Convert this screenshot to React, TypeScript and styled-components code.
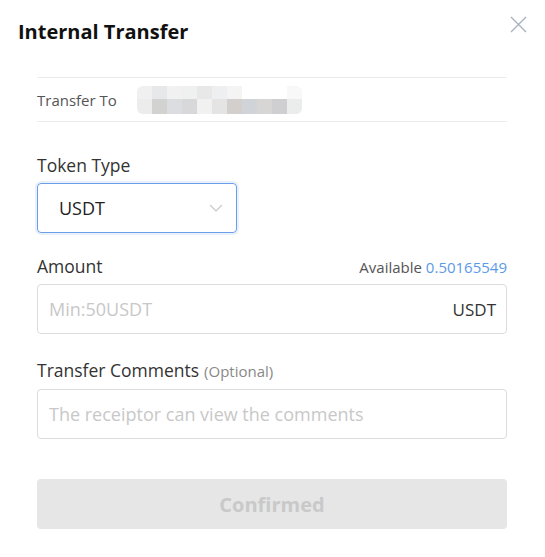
import React from "react";
import styled, { createGlobalStyle } from "styled-components";

const GlobalStyle = createGlobalStyle`
  body {
    margin: 0;
    background: #fff;
    font-family: "Open Sans", "Liberation Sans", sans-serif;
  }
`;

const Modal = styled.div`
  width: 545px;
  height: 557px;
  position: relative;
  background: #fff;
`;

const Header = styled.div`
  padding: 18px 18px 0;
  height: 77px;
  box-sizing: border-box;
`;

const Title = styled.h1`
  margin: 0;
  font-size: 20px;
  line-height: 28px;
  font-weight: 700;
  color: #111;
`;

const Close = styled.button`
  position: absolute;
  top: 15px;
  right: 17px;
  width: 19px;
  height: 19px;
  padding: 0;
  border: 0;
  background: none;
  cursor: pointer;
`;

const Body = styled.div`
  padding: 0 38px 0 37px;
`;

const InfoRow = styled.div`
  display: flex;
  align-items: center;
  height: 45px;
  box-sizing: border-box;
  border-top: 1px solid #ececec;
  border-bottom: 1px solid #ececec;
  font-size: 15px;
  color: #555;
`;

const Masked = styled.div`
  display: grid;
  grid-template-columns: repeat(11, 15px);
  grid-template-rows: 13px 15px;
  margin-left: 20px;
  margin-top: 1px;
  border-radius: 6px;
  overflow: hidden;
`;

const Cell = styled.span<{ c: string }>`
  background: ${(p) => p.c};
`;

const Field = styled.div<{ mt: number }>`
  margin-top: ${(p) => p.mt}px;
`;

const LabelRow = styled.div<{ mb: number; spread?: boolean }>`
  display: flex;
  justify-content: ${(p) => (p.spread ? "space-between" : "flex-start")};
  align-items: baseline;
  line-height: 24px;
  margin-bottom: ${(p) => p.mb}px;
`;

const Label = styled.span`
  font-size: 17.5px;
  color: #333;
`;

const Hint = styled.span`
  font-size: 15px;
  color: #888;
  margin-left: 5px;
`;

const Available = styled.span`
  font-size: 15px;
  color: #555;
`;

const Blue = styled.span`
  color: #5b9ae6;
`;

const Select = styled.div`
  width: 200px;
  height: 50px;
  box-sizing: border-box;
  display: flex;
  align-items: center;
  justify-content: space-between;
  padding: 0 13px 0 21px;
  border: 1px solid #6c9ee8;
  border-radius: 4px;
  box-shadow: 0 0 0 2px rgba(108, 158, 232, 0.15);
  font-size: 18px;
  color: #222;
`;

const InputBox = styled.div`
  height: 50px;
  box-sizing: border-box;
  display: flex;
  align-items: center;
  justify-content: space-between;
  padding: 0 10px 0 11px;
  border: 1px solid #dcdcdc;
  border-radius: 4px;
`;

const Placeholder = styled.span`
  font-size: 18px;
  color: #c8c8c8;
`;

const Suffix = styled.span`
  font-size: 17px;
  color: #333;
`;

const Button = styled.button`
  display: block;
  width: 100%;
  height: 50px;
  margin-top: 40px;
  border: 0;
  border-radius: 4px;
  background: #e6e6e6;
  font-family: inherit;
  font-size: 20px;
  font-weight: 700;
  color: #c9c9c9;
`;

const row1 = ["#f0f0f0", "#e6e8ea", "#f0f1f0", "#eff0f0", "#e8e8e9", "#eeeff0", "#f4f4f4", "#fff", "#fff", "#fff", "#f8f8f8"];
const row2 = ["#ececec", "#d2d2d0", "#dcdde0", "#d8d8da", "#f1f1f1", "#e5e4e5", "#d3cfcc", "#d0d4d8", "#d8d6d4", "#cfcfd1", "#ebeded"];

const App = () => {
  return (
    <Modal>
      <GlobalStyle />
      <Header>
        <Title>Internal Transfer</Title>
      </Header>
      <Close aria-label="close">
        <svg width="19" height="19" viewBox="0 0 19 19">
          <path d="M2 2 L17 17 M17 2 L2 17" stroke="#a9b3c0" strokeWidth="1.4" fill="none" />
        </svg>
      </Close>
      <Body>
        <InfoRow>
          Transfer To
          <Masked>
            {row1.concat(row2).map((c, i) => (
              <Cell key={i} c={c} />
            ))}
          </Masked>
        </InfoRow>

        <Field mt={31}>
          <LabelRow mb={6}>
            <Label>Token Type</Label>
          </LabelRow>
          <Select>
            USDT
            <svg width="14" height="8" viewBox="0 0 14 8">
              <path d="M1 1 L7 7 L13 1" stroke="#c8c8c8" strokeWidth="1.2" fill="none" />
            </svg>
          </Select>
        </Field>

        <Field mt={21}>
          <LabelRow mb={5} spread>
            <Label>Amount</Label>
            <Available>
              Available <Blue>0.50165549</Blue>
            </Available>
          </LabelRow>
          <InputBox>
            <Placeholder>Min:50USDT</Placeholder>
            <Suffix>USDT</Suffix>
          </InputBox>
        </Field>

        <Field mt={24}>
          <LabelRow mb={6}>
            <Label>Transfer Comments</Label>
            <Hint>(Optional)</Hint>
          </LabelRow>
          <InputBox>
            <Placeholder>The receiptor can view the comments</Placeholder>
          </InputBox>
        </Field>

        <Button>Confirmed</Button>
      </Body>
    </Modal>
  );
};

export default App;
